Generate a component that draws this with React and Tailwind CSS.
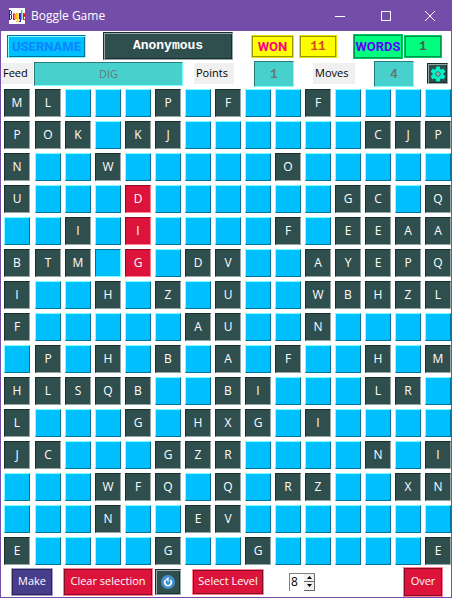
import React from "react";

const ROWS = [
  "ML...P.F..F....",
  "POK.KJ......CJP",
  "N..W.....O.....",
  "U...D......GC.Q",
  "..I.I....F.EEAA",
  "BTM.G.DV..AYEPQ",
  "I..H.Z.U..WBHZL",
  "F.....AU..N....",
  ".P.H.B.A.F..H.M",
  "HLSQB..BI...LR.",
  "L...G.HXG.I....",
  "JC...GZR....N.I",
  "...WFQ.Q.RZ..XN",
  "...N..EV.......",
  "E....G..G.....E",
];

const SELECTED = ["3-4", "4-4", "5-4"];
const FOCUSED = "5-3";

const MONO = "font-['Liberation_Mono',monospace] font-bold text-[13px]";
const BANNER = "font-['Roboto',sans-serif] font-bold text-[13px]";
const YELLOW = "border border-[#e5e500] bg-[#ffff00] shadow-[inset_0_0_0_1px_#989800]";
const GREEN = "border border-[#00c864] bg-[#00ff7f] shadow-[inset_0_0_0_1px_#00984c]";
const CRIMSON = "border border-[#ff8095] bg-[#dc143c] shadow-[inset_0_0_0_1px_#840c24]";
const SLATE =
  "border border-t-[#1a2e2e] border-l-[#1a2e2e] border-b-[#97a7a7] border-r-[#97a7a7] bg-[#2f4f4f] shadow-[inset_1px_1px_0_#97a7a7,inset_-1px_-1px_0_#1a2e2e]";
const ENTRY =
  "border border-t-[#2b7d7a] border-l-[#2b7d7a] border-b-[#7fffff] border-r-[#7fffff] bg-[#48d1cc] text-center text-[#617a7a]";

function Tile({ letter, row, col }) {
  const id = `${row}-${col}`;
  let look = "bg-[#00bfff] border-t-[#7fffff] border-l-[#7fffff] border-b-[#00729a] border-r-[#00729a]";
  if (SELECTED.includes(id)) {
    look = "bg-[#dc143c] border-t-[#840c24] border-l-[#840c24] border-b-[#ff8090] border-r-[#ff8090]";
  } else if (letter !== ".") {
    look = "bg-[#2f4f4f] border-t-[#1a2e2e] border-l-[#1a2e2e] border-b-[#97a7a7] border-r-[#97a7a7]";
  } else if (id === FOCUSED) {
    look = "bg-[#00bfff] border-t-[#00729a] border-l-[#00729a] border-b-[#7fffff] border-r-[#7fffff]";
  }
  return (
    <button
      aria-label={letter === "." ? `Empty cell ${row + 1}, ${col + 1}` : undefined}
      className={`h-7 border text-center text-xs leading-6 text-white ${look} ${col === 0 ? "mr-px" : ""}`}
    >
      {letter === "." ? "" : letter}
    </button>
  );
}

function Logo() {
  return (
    <svg className="h-4 w-4" viewBox="0 0 16 16" aria-hidden="true">
      <rect width="16" height="16" fill="#fff" />
      <g fill="none" strokeWidth="1">
        <path d="M.5 2v9.500M0 2.500h2M2.500 3v3M0 6.500h2.500M2.500 7v4M0 11.500h2" stroke="#1d1de0" />
        <path d="M4.500 6v5.500M6 6v5.500M4 6h2M4 11.500h2" stroke="#ee1111" />
        <path d="M9 5.500H7.500v5.500H9M8.900 5v9M7 13.500h2" stroke="#ffc000" strokeWidth="1.200" />
        <path d="M11.500 5.500H10.500v5.500H11.500M11.400 5v9M10 13.500h1.400" stroke="#1d1de0" />
        <path d="M12.800 2v10" stroke="#11aa33" />
        <path d="M14.500 5.500v6M14 5.500h1.500v3H14M14 11.500h2" stroke="#ee1111" />
      </g>
    </svg>
  );
}

function TitleBar() {
  return (
    <header className="flex h-[31px] items-center bg-[#744da9] pl-2 text-white">
      <Logo />
      <h1 className="ml-1.5 text-xs">Boggle Game</h1>
      <div className="ml-auto flex">
        <button aria-label="Minimize" className="flex h-[31px] w-[46px] items-center justify-center">
          <svg className="h-2.5 w-2.5" viewBox="0 0 10 10" stroke="#fff"><path d="M0 5.500h10" /></svg>
        </button>
        <button aria-label="Maximize" className="flex h-[31px] w-[45px] items-center justify-center">
          <svg className="h-2.5 w-2.5" viewBox="0 0 10 10" stroke="#fff" fill="none"><path d="M.5.5h9v9h-9z" /></svg>
        </button>
        <button aria-label="Close" className="flex h-[31px] w-[43px] items-center justify-center">
          <svg className="h-2.5 w-2.5" viewBox="0 0 10 10" stroke="#fff"><path d="M0 0l10 10M10 0L0 10" /></svg>
        </button>
      </div>
    </header>
  );
}

function Scoreboard() {
  return (
    <section className="flex h-[30px] items-center pr-[9px] pl-1.5">
      <div className={`${BANNER} h-[23px] w-[79px] border border-t-[#00729a] border-l-[#00729a] border-b-[#7fffff] border-r-[#7fffff] bg-[#00bfff] text-center leading-[21px] text-[#0a84ff] shadow-[inset_1px_1px_0_#7fffff,inset_-1px_-1px_0_#00729a]`}>
        USERNAME
      </div>
      <div className={`${MONO} ${SLATE} ml-[17px] h-7 flex-1 text-center leading-[26px] text-white`}>Anonymous</div>
      <div className={`${BANNER} ${YELLOW} ml-[18px] h-[23px] w-[43px] text-center leading-[21px] text-[#ff0080]`}>WON</div>
      <div className={`${MONO} ${YELLOW} ml-[5px] h-[23px] w-[38px] text-center leading-[21px] text-[#d2481e]`}>11</div>
      <div className={`${BANNER} ${GREEN} ml-4 h-[25px] w-[50px] text-center leading-[23px] text-[#5a00ff]`}>WORDS</div>
      <div className={`${MONO} ${GREEN} ml-px h-[23px] w-[38px] text-center leading-[21px] text-[#4b5f4f]`}>1</div>
    </section>
  );
}

function Gear() {
  return (
    <svg className="h-4 w-4" viewBox="0 0 16 16" aria-hidden="true">
      <g fill="#00f5c8">
        <circle cx="8" cy="8" r="5.500" />
        <rect x="6" y="0.500" width="4" height="15" rx="1" />
        <rect x="6" y="0.500" width="4" height="15" rx="1" transform="rotate(60 8 8)" />
        <rect x="6" y="0.500" width="4" height="15" rx="1" transform="rotate(120 8 8)" />
      </g>
      <circle cx="8" cy="8" r="2.200" fill="#c8f5ee" stroke="#2f4f4f" />
      <circle cx="8" cy="8" r="0.800" fill="#2f4f4f" />
    </svg>
  );
}

function StatusRow() {
  const label = "h-[21px] bg-[#f0f0f0] pl-0.5 text-[11px] leading-[20px] text-black";
  return (
    <section className="flex h-7 items-start pt-0.5 pr-[3px]">
      <label htmlFor="feed" className={`${label} w-8`}>Feed</label>
      <input id="feed" readOnly value="DIG" className={`${ENTRY} -mt-px ml-px h-6 min-w-0 flex-1 pb-0.5 text-[11px]`} />
      <label htmlFor="points" className={`${label} ml-[11px] w-10`}>Points</label>
      <input id="points" readOnly value="1" className={`${ENTRY} ${MONO} -mt-0.5 ml-5 h-[26px] w-10`} />
      <label htmlFor="moves" className={`${label} ml-[19px] w-[42px]`}>Moves</label>
      <input id="moves" readOnly value="4" className={`${ENTRY} ${MONO} -mt-0.5 ml-[19px] h-[26px] w-10`} />
      <button aria-label="Settings" className={`${SLATE} ml-[13px] flex h-[21px] w-[21px] items-center justify-center`}>
        <Gear />
      </button>
    </section>
  );
}

function Controls() {
  return (
    <footer className="flex h-8 items-center pt-px pr-2 pl-2.5 text-[11px] text-white">
      <button className="h-7 w-[42px] border border-[#a39ec5] bg-[#483d8b] shadow-[inset_0_0_0_1px_#2b2553]">Make</button>
      <button className={`${CRIMSON} ml-2.5 h-7 w-[90px]`}>Clear selection</button>
      <button aria-label="Restart" className={`${SLATE} ml-0.5 flex h-[26px] w-[26px] items-center justify-center`}>
        <svg className="h-3.5 w-3.5" viewBox="0 0 14 14" aria-hidden="true">
          <circle cx="7" cy="7" r="7" fill="#4090d0" />
          <path d="M4.600 5a3.300 3.300 0 1 0 4.800 0" fill="none" stroke="#fff" strokeWidth="1.500" />
          <path d="M7.600 2v5L4.600 4.300z" fill="#fff" />
        </svg>
      </button>
      <button className={`${CRIMSON} ml-[11px] h-[26px] w-[72px]`}>Select Level</button>
      <div className="ml-[25px] flex h-[18px] w-[26px] border-t border-l border-[#808080] bg-white text-black">
        <input
          aria-label="Level"
          type="number"
          defaultValue="8"
          className="w-[14px] pl-px text-xs leading-4 [appearance:textfield] [&::-webkit-inner-spin-button]:appearance-none"
        />
        <div className="flex flex-1 flex-col">
          <button aria-label="Increase" className="flex flex-1 items-center justify-center border-r border-b border-[#696969] bg-[#f0f0f0]">
            <svg className="h-[3px] w-[5px]" viewBox="0 0 5 3"><path d="M0 3L2.500 0 5 3z" /></svg>
          </button>
          <button aria-label="Decrease" className="flex flex-1 items-center justify-center border-r border-b border-[#696969] bg-[#f0f0f0]">
            <svg className="h-[3px] w-[5px]" viewBox="0 0 5 3"><path d="M0 0L2.500 3 5 0z" /></svg>
          </button>
        </div>
      </div>
      <button className={`${CRIMSON} ml-auto h-[30px] w-10`}>Over</button>
    </footer>
  );
}

export default function App() {
  return (
    <main className="border border-t-0 border-[#744da9] bg-white font-['Open_Sans',sans-serif] text-xs">
      <TitleBar />
      <Scoreboard />
      <StatusRow />
      <section className="grid grid-cols-[27fr_repeat(14,26fr)] gap-1 pl-[3px]">
        {ROWS.map((r, i) => [...r].map((l, j) => <Tile key={`${i}-${j}`} letter={l} row={i} col={j} />))}
      </section>
      <Controls />
    </main>
  );
}
